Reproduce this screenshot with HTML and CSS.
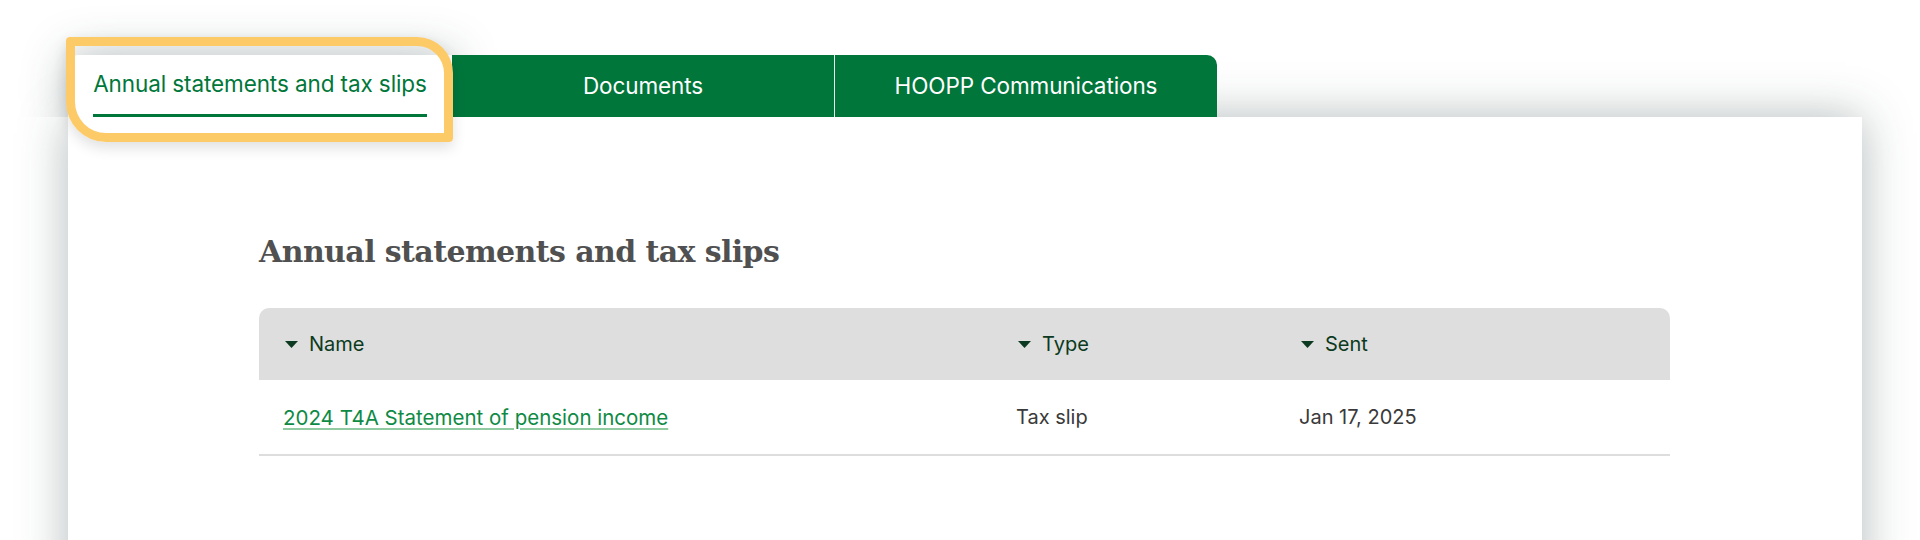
FILE: index.html
```html
<!DOCTYPE html>
<html lang="en">
<head>
<meta charset="utf-8">
<title>Annual statements and tax slips</title>
<link rel="stylesheet" href="styles.css">
</head>
<body>
<div class="page">
  <div class="panel">
    <div class="tabs">
      <div class="tab tab-active"><span class="tab-label">Annual statements and tax slips</span></div>
      <div class="tab tab-green">Documents</div>
      <div class="tab tab-green tab-last">HOOPP Communications</div>
      <div class="focus-ring"></div>
    </div>
    <div class="card">
      <h2 class="heading">Annual statements and tax slips</h2>
      <div class="table">
        <div class="thead">
          <div class="th"><svg class="caret" width="13" height="7" viewBox="0 0 13 7"><path d="M0 0h13L6.5 7z" fill="currentColor"/></svg>Name</div>
          <div class="th"><svg class="caret" width="13" height="7" viewBox="0 0 13 7"><path d="M0 0h13L6.5 7z" fill="currentColor"/></svg>Type</div>
          <div class="th"><svg class="caret" width="13" height="7" viewBox="0 0 13 7"><path d="M0 0h13L6.5 7z" fill="currentColor"/></svg>Sent</div>
        </div>
        <div class="trow">
          <div class="td"><a class="doc-link" href="#">2024 T4A Statement of pension income</a></div>
          <div class="td">Tax slip</div>
          <div class="td">Jan 17, 2025</div>
        </div>
      </div>
    </div>
  </div>
</div>
</body>
</html>
```
FILE: styles.css
```css
html, body {
  margin: 0;
  padding: 0;
  background: #ffffff;
  height: 540px;
  overflow: hidden;
}

body {
  font-family: Inter, "Open Sans", sans-serif;
}

.page {
  padding: 55px 0 0 68px;
}

.panel {
  width: 1794px;
}

.tabs {
  position: relative;
  z-index: 2;
  display: flex;
  height: 62px;
}

.tab {
  width: 382px;
  height: 62px;
  box-sizing: border-box;
  display: flex;
  align-items: center;
  justify-content: center;
  font-size: 22.5px;
  letter-spacing: -0.1px;
}

.tab-active {
  width: 384px;
  background: #ffffff;
  color: #00773a;
  border-radius: 10px 0 0 0;
  align-items: flex-end;
  box-shadow: 0 0 45px rgba(40, 60, 60, 0.35);
  clip-path: inset(-80px -80px 0 -80px);
}

.tab-label {
  display: block;
  line-height: 26px;
  padding-bottom: 17px;
  border-bottom: 3px solid #00773a;
}

.tab-green {
  position: relative;
  background: #00763b;
  color: #ffffff;
  padding-bottom: 2px;
}

.tab-last {
  width: 383px;
  border-left: 1px solid #e6efe9;
  border-radius: 0 10px 0 0;
}

.focus-ring {
  position: absolute;
  left: -2px;
  top: -18px;
  width: 387px;
  height: 105px;
  box-sizing: border-box;
  border: 9px solid #fdca68;
  border-radius: 4px 36px 4px 40px;
  box-shadow: 0 6px 14px rgba(0, 0, 0, 0.12);
  pointer-events: none;
}

.card {
  position: relative;
  z-index: 1;
  background: #ffffff;
  box-shadow: 0 0 45px rgba(40, 60, 60, 0.35);
  padding: 115px 192px 0 191px;
  min-height: 500px;
}

.heading {
  margin: 0 0 36px;
  font-family: "DejaVu Serif", "Liberation Serif", serif;
  font-weight: bold;
  font-size: 30px;
  line-height: 40px;
  color: #505050;
  letter-spacing: -0.6px;
}

.table {
  width: 1411px;
}

.thead,
.trow {
  display: grid;
  grid-template-columns: 733px 283px 1fr;
}

.thead {
  background: #dedede;
  border-radius: 10px 10px 0 0;
  height: 72px;
}

.trow {
  height: 74px;
  border-bottom: 2px solid #dddddd;
}

.th,
.td {
  display: flex;
  align-items: center;
  padding-left: 24px;
  font-size: 20px;
}

.th {
  color: #0c3a20;
  gap: 11px;
}

.th .caret {
  margin-left: 2px;
}

.td {
  color: #3a3a3a;
}

.doc-link {
  color: #0e8a45;
  font-size: 20.5px;
  text-decoration: underline;
  text-decoration-color: #8fcaa1;
  text-decoration-thickness: 2px;
  text-underline-offset: 3px;
}
```
